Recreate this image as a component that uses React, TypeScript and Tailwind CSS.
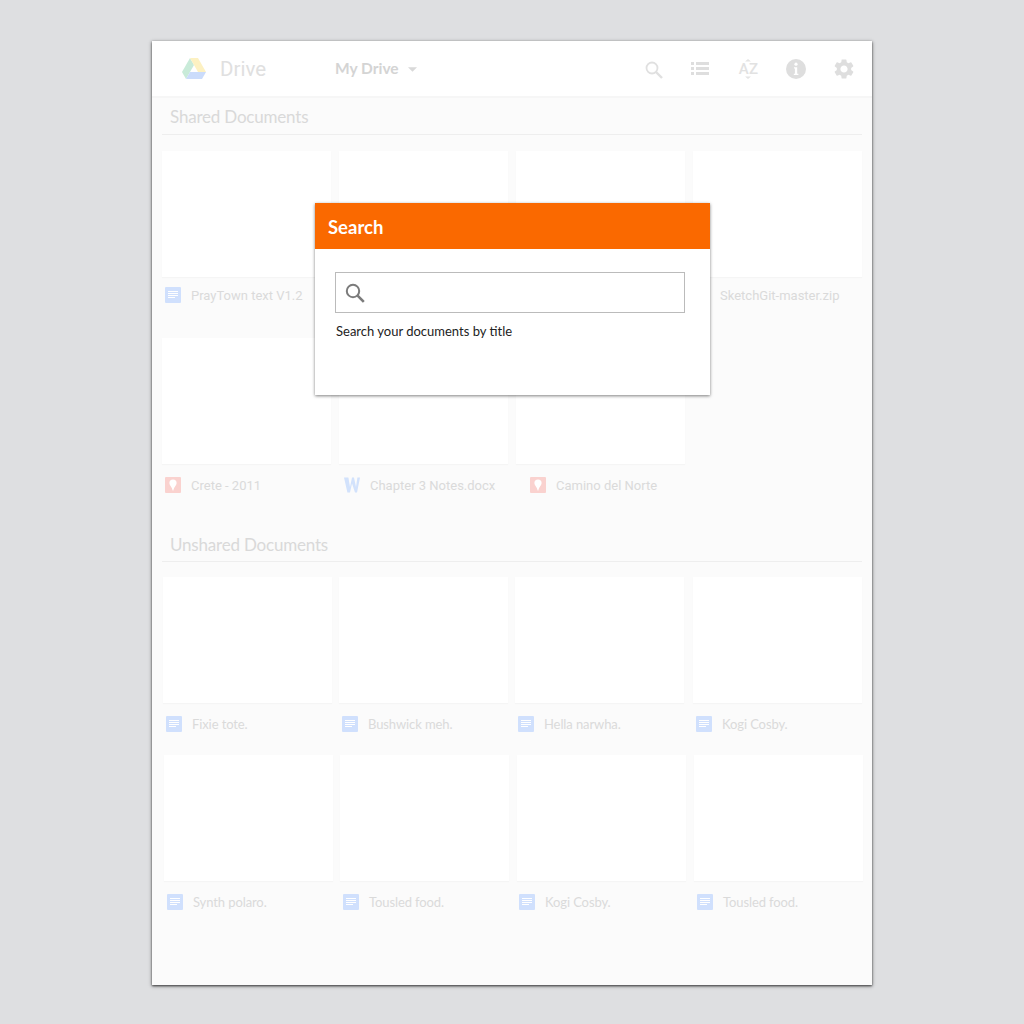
import React from "react";
import { MdSettings } from "react-icons/md";

type Kind = "doc" | "map" | "word";

const roboto = "font-['Roboto',sans-serif]";
const lato = "font-['Lato',sans-serif]";

function FileIcon({ kind }: { kind: Kind }) {
  if (kind === "doc")
    return (
      <svg width="16" height="16" viewBox="0 0 16 16" className="block shrink-0">
        <rect width="16" height="16" rx="1" fill="#d0e0fd" />
        <path d="M3 4.5h10M3 6.5h10M3 8.5h10M3 10.5h7" stroke="#fff" strokeWidth="1" />
      </svg>
    );
  if (kind === "map")
    return (
      <svg width="16" height="16" viewBox="0 0 16 16" className="block shrink-0">
        <rect width="16" height="16" rx="1" fill="#fad2cf" />
        <path d="M8 2.5a3.6 3.6 0 0 1 3.6 3.6C11.6 8.4 9 10 8.4 13.5h-.8C7 10 4.4 8.4 4.4 6.1A3.6 3.6 0 0 1 8 2.5Z" fill="#fff" />
      </svg>
    );
  return (
    <svg width="16" height="16" viewBox="0 0 16 16" className="block shrink-0">
      <path d="M0 .5h4.4l1.6 9.4L8 .5h2l2 9.4L13.4.5H16l-3 15h-2L8 6.5l-2 9H3.4Z" fill="#d2e2fc" />
    </svg>
  );
}

function FileCell({
  name,
  kind,
  margin = "",
  row,
  textCls,
}: {
  name?: string;
  kind?: Kind;
  margin?: string;
  row?: string;
  textCls?: string;
}) {
  return (
    <div className={`w-[169px] shrink-0 ${margin}`}>
      <div className="h-[126px] bg-white shadow-[0_1px_1px_rgba(0,0,0,0.025)]" />
      {name ? (
        <div className={`flex h-4 items-center ${row}`}>
          {kind ? <FileIcon kind={kind} /> : null}
          <span className={`whitespace-nowrap text-[13px] leading-4 text-[#dadada] ${textCls}`}>{name}</span>
        </div>
      ) : null}
    </div>
  );
}

function SectionTitle({ text, cls = "", leading }: { text: string; cls?: string; leading: string }) {
  return (
    <div className={`mx-[10px] h-[38px] border-b border-[#eeeeee] ${cls}`}>
      <div className={`pl-2 text-[17px] tracking-[-0.2px] text-[#d9d9d9] ${leading} ${lato}`}>{text}</div>
    </div>
  );
}

const shared1 = `ml-[10px] mt-[2px] ${roboto}`;
const unshared = `ml-[10px] tracking-[-0.1px] ${lato}`;

export default function App() {
  return (
    <div className="h-[1024px] w-[1024px] overflow-hidden bg-[#dedfe1] pt-[41px]">
      <div className="relative ml-[152px] h-[944px] w-[720px] bg-[#fbfbfb] shadow-[0_1px_2px_rgba(0,0,0,0.6),0_1px_4px_rgba(0,0,0,0.4)]">
        {/* Top bar */}
        <header className="flex h-[55px] items-center bg-white pl-[30px] pr-[18px] shadow-[0_2px_0_#f6f6f6]">
          <svg width="24" height="21" viewBox="0 0 24 21" className="block shrink-0">
            <path d="M8 0 12 7 4 21 0 14Z" fill="#c9ebd9" />
            <path d="M8 0h8l8 14h-8Z" fill="#fdf1c2" />
            <path d="M8 14h16l-4 7H4Z" fill="#cbdcfb" />
          </svg>
          <span className={`ml-[14px] mt-[2px] w-[115px] text-[20.5px] text-[#e0e0e0] ${roboto}`}>Drive</span>
          <span className={`text-[15.5px] font-bold text-[#d4d4d4] ${lato}`}>My Drive</span>
          <svg width="9" height="5" viewBox="0 0 10 5" className="ml-[9px] mt-[2px] block shrink-0">
            <path d="M0 0h10L5 5Z" fill="#d9d9d9" />
          </svg>
          <div className="ml-auto flex items-center gap-[28px]">
            <svg width="18" height="18" viewBox="0 0 18 18" className="mt-[3px] block">
              <circle cx="7" cy="7" r="5.5" fill="none" stroke="#e0e0e0" strokeWidth="1.8" />
              <path d="m11 11 6 6" stroke="#e0e0e0" strokeWidth="2.4" />
            </svg>
            <svg width="18" height="14" viewBox="0 0 18 14" className="mr-[2px] mt-[1px] block">
              <path d="M0 0h3v3H0zM5 0h13v3H5zM0 5h3v3H0zM5 5h13v3H5zM0 10h3v3H0zM5 10h13v3H5z" fill="#dedede" />
            </svg>
            <div className="relative flex h-5 w-[19px] items-center justify-center">
              <span className={`mt-[1px] text-[15px] font-medium leading-none tracking-[0.2px] text-[#e2e2e2] ${roboto}`}>AZ</span>
              <svg width="6" height="20" viewBox="0 0 6 20" className="absolute left-[6px] top-0">
                <path d="M0 2.6 3 0l3 2.6ZM0 17.4 3 20l3-2.6Z" fill="#e4e4e4" />
              </svg>
            </div>
            <svg width="20" height="20" viewBox="0 0 20 20" className="block">
              <circle cx="10" cy="10" r="10" fill="#dedede" />
              <circle cx="10" cy="5.2" r="1.6" fill="#fff" />
              <path d="M8 8.2h3.2v6.6H12.4v1.2H7.8v-1.2h1.1V9.4H8Z" fill="#fff" />
            </svg>
            <MdSettings className="-mx-[2px] block text-[24px] text-[#dedede]" />
          </div>
        </header>

        {/* Shared */}
        <div className="pt-[1px]">
          <SectionTitle text="Shared Documents" leading="leading-[39px]" />
          <div className="flex pl-[10px] pt-[16px]">
            <FileCell name="PrayTown text V1.2" kind="doc" row="mt-[10px] pl-[3px]" textCls={shared1} />
            <FileCell margin="ml-2" />
            <FileCell margin="ml-2" />
            <FileCell name="SketchGit-master.zip" margin="ml-2" row="mt-[10px] pl-[27px]" textCls={`mt-[2px] ${roboto}`} />
          </div>
          <div className="flex pl-[10px] pt-[35px]">
            <FileCell name="Crete - 2011" kind="map" row="mt-[13px] pl-[3px]" textCls={shared1} />
            <FileCell name="Chapter 3 Notes.docx" kind="word" margin="ml-2" row="mt-[13px] pl-[5px]" textCls={shared1} />
            <FileCell name="Camino del Norte" kind="map" margin="ml-2" row="mt-[13px] pl-[14px]" textCls={shared1} />
          </div>
        </div>

        {/* Unshared */}
        <SectionTitle text="Unshared Documents" cls="mt-[31px]" leading="leading-[41px]" />
        <div className="flex pl-[11px] pt-[15px]">
          <FileCell name="Fixie tote." kind="doc" row="mt-[13px] pl-[3px]" textCls={unshared} />
          <FileCell name="Bushwick meh." kind="doc" margin="ml-[7px]" row="mt-[13px] pl-[3px]" textCls={unshared} />
          <FileCell name="Hella narwha." kind="doc" margin="ml-[7px]" row="mt-[13px] pl-[3px]" textCls={unshared} />
          <FileCell name="Kogi Cosby." kind="doc" margin="ml-[9px]" row="mt-[13px] pl-[3px]" textCls={unshared} />
        </div>
        <div className="flex pl-[12px] pt-[23px]">
          <FileCell name="Synth polaro." kind="doc" row="mt-[13px] pl-[3px]" textCls={unshared} />
          <FileCell name="Tousled food." kind="doc" margin="ml-[7px]" row="mt-[13px] pl-[3px]" textCls={unshared} />
          <FileCell name="Kogi Cosby." kind="doc" margin="ml-2" row="mt-[13px] pl-[2px]" textCls={unshared} />
          <FileCell name="Tousled food." kind="doc" margin="ml-2" row="mt-[13px] pl-[3px]" textCls={unshared} />
        </div>

        {/* Search dialog */}
        <div className="absolute left-[163px] top-[162px] h-[192px] w-[395px] bg-white shadow-[0_1px_3px_rgba(0,0,0,0.5)]">
          <div className={`flex h-[46px] items-center bg-[#fa6900] pl-[13px] pt-[4px] text-[18.5px] font-bold text-white ${lato}`}>Search</div>
          <div className="px-5 pt-[23px]">
            <div className="flex h-[41px] w-[350px] items-center border border-[#bbbbbb] pl-[9px]">
              <svg width="20" height="20" viewBox="0 0 20 20" className="block">
                <circle cx="8" cy="8" r="6.2" fill="none" stroke="#7b7b7b" strokeWidth="2" />
                <path d="m12.6 12.6 6.2 6.2" stroke="#7b7b7b" strokeWidth="2.6" />
              </svg>
            </div>
            <div className={`pl-[1px] pt-[9px] text-[13px] leading-[18px] text-[#222222] ${lato}`}>Search your documents by title</div>
          </div>
        </div>
      </div>
    </div>
  );
}
